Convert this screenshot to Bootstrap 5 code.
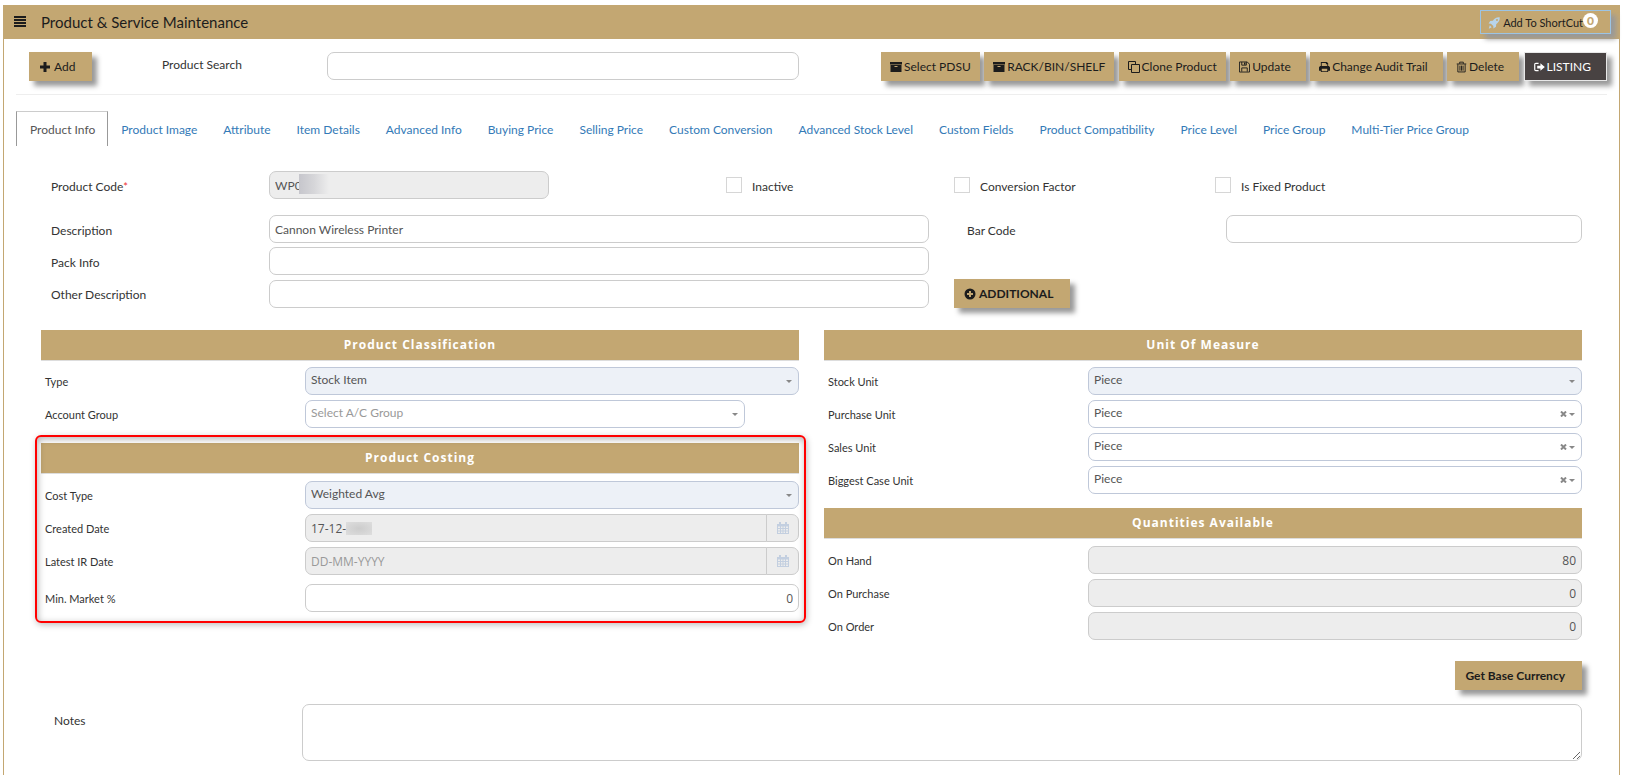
<!DOCTYPE html>
<html lang="en">
<head>
<meta charset="utf-8">
<meta name="viewport" content="width=device-width, initial-scale=1">
<title>Product &amp; Service Maintenance</title>
<link href="https://cdn.jsdelivr.net/npm/bootstrap@5.3.0/dist/css/bootstrap.min.css" rel="stylesheet">
<style>
  :root { --gold: #c3a772; --line: #ccc; }
  body { font-family: Lato, "Open Sans", sans-serif; font-size: 12px; line-height: 18px; color: #333; background: #fff; }
  .app-frame { margin: 5px 5px 0 3px; border: 1px solid var(--gold); border-top: 0; border-bottom: 0; min-height: calc(100vh - 5px); }
  .app-bar { background: var(--gold); height: 34px; padding: 0 8px 0 10px; color: #1c1c1c; }
  .app-bar h1 { font-size: 15px; line-height: 20px; font-weight: 400; }
  .bar-icon { margin-right: 15px; }
  .workarea { padding: 13px 12px 0; }

  .btn-gold { --bs-btn-color: #1c1c1c; --bs-btn-bg: var(--gold); --bs-btn-hover-bg: #b39660; --bs-btn-active-bg: #b39660;
    --bs-btn-border-radius: 0; --bs-btn-border-width: 0; --bs-btn-font-size: 12px; --bs-btn-line-height: 18px;
    height: 29px; padding: 0 10px; display: inline-flex; align-items: center; gap: 3px; white-space: nowrap;
    box-shadow: 5px 5px 5px #999; }
  .btn-gold.trail { padding-right: 17px; }
  .btn-listing { --bs-btn-color: #fff; --bs-btn-bg: #484242; --bs-btn-hover-color: #fff; border: 1px solid #e8e8e8; }
  .btn-cut { --bs-btn-font-size: 11px; height: 24px; padding: 2px 24px 0 7px; border: 1px solid #9cc4e4; position: relative; }
  .btn-cut .cut-count { position: absolute; top: 2px; right: 12px; width: 15px; height: 15px; border-radius: 8px; padding: 0;
    background: #fff; color: var(--gold); font-size: 12px; line-height: 15px; font-weight: 900; text-align: center; }
  .ico { width: 12px; height: 12px; flex: none; fill: currentColor; }
  .ico-rocket { color: #b8d4ea; }

  .toolbar { display: grid; grid-template-columns: 133fr 165fr 472fr 82fr 726fr; padding-left: 13px; align-items: start; }
  .toolbar-actions { display: flex; justify-content: space-between; }
  .toolbar-actions .btn-gold { padding: 0 9px; gap: 2px; }
  .toolbar-actions .btn-gold.trail { padding-right: 15px; }
  .toolbar-actions .trail .ico { width: 11px; }
  .rule { height: 1px; margin: 13px 0 16px; background: #eee; }

  .form-control, .form-select { height: 28px; padding: 0 5px; border: 1px solid var(--line); border-radius: 7px; font-size: 12px;
    line-height: 18px; color: #555; background-color: #fff; }
  .form-control:disabled { background: #ededed; opacity: 1; color: #555; }
  .form-control::placeholder { color: #999; }
  .form-control.figures { font-family: "Open Sans", sans-serif; }
  .form-select { padding: 0 30px 3px 5px; border-color: #bfc8d9; background-image: none; }
  .form-select:disabled { background-color: #edf1f7; color: #555; opacity: 1; }
  .form-select.hint { color: #999; }
  .pick { position: relative; }
  .pick::after { content: ""; position: absolute; right: 7px; top: 13px; border: 3px solid transparent; border-top-color: #888; border-bottom: 0; pointer-events: none; }
  .pick-clear { position: absolute; right: 14px; top: 9px; width: 8px; height: 10px; padding: 0; border: 0; background: none; color: #888; display: flex; align-items: center; }
  .pick-clear svg { width: 7px; height: 6px; stroke: currentColor; stroke-width: 2; }

  .nav-tabs { --bs-nav-tabs-border-width: 0; --bs-nav-tabs-border-radius: 0; --bs-nav-link-padding-x: 13px; --bs-nav-link-font-size: 12px; --bs-nav-link-color: #337ab7; }
  .nav-tabs .nav-link { height: 35px; padding-top: 10px; padding-bottom: 7px; white-space: nowrap; margin: 0; }
  .nav-tabs .nav-link.active { color: #555; border: 1px solid #999; border-top-color: #ccc; border-bottom: 0; padding: 9px 12px 7px 13px; }

  .panel-body { padding: 25px 25px 0; }
  .grid-flags { display: grid; grid-template-columns: 228fr 280fr 177fr 228fr 261fr 367fr; align-items: center; margin-bottom: 16px; }
  .grid-flags label, .grid-desc label { padding-top: 3px; }
  .grid-desc { display: grid; grid-template-columns: 228fr 660fr 25fr 272fr 356fr; row-gap: 4px; align-items: center; margin-bottom: 22px; }
  .indent { padding-left: 10px; }
  .indent-code { padding-left: 13px; }
  .flag { display: flex; align-items: center; gap: 10px; }
  .flag .form-check-input { width: 16px; height: 16px; margin: 0; border: 1px solid #d6d6d6; border-radius: 0; }
  .req { color: #e33; font-size: 11px; }

  .sections { display: grid; grid-template-columns: 1fr 1fr; column-gap: 25px; align-items: start; }
  .sec-head { background: var(--gold); border-bottom: 1px solid #ddd; height: 31px; color: #fff; font-family: "Open Sans", sans-serif; font-size: 12px; line-height: 30px; font-weight: 700;
    letter-spacing: 1px; text-align: center; margin: 0; }
  .sec-rows { display: grid; grid-template-columns: 264fr 494fr; row-gap: 5px; align-items: center; padding-top: 6px; }
  .sec-rows.roomy { padding-top: 7px; }
  .sec-rows > label { padding-left: 4px; font-size: 11px; padding-top: 2px; }
  .short { width: 89%; }
  .sec-gap { margin-top: 15px; }
  .sec-gap-right { margin-top: 14px; }
  .last-row { margin-top: 4px; }
  .date-group .form-control { border-radius: 7px 0 0 7px; }
  .date-btn { width: 33px; height: 28px; border: 1px solid var(--line); margin-left: -1px; border-radius: 0 7px 7px 0; background: #ededed; color: #c3cfe0;
    display: flex; align-items: center; justify-content: center; padding: 0; }

  /* highlighted section */
  .callout-box { position: relative; }
  .callout-box::after { content: ""; position: absolute; inset: -8px -7px -11px -6px; border: 2px solid #f00; border-radius: 6px; pointer-events: none;
    box-shadow: 1px 2px 6px rgba(0,0,0,.25), inset 1px 2px 7px rgba(0,0,0,.3); }
  /* masked characters */
  .masked { position: relative; }
  .masked::after { content: ""; position: absolute; left: 30px; top: 3px; width: 30px; height: 20px; background: linear-gradient(90deg, #c6c6cc, #d6d6d9 50%, #ededed); }
  .masked.date::after { left: 41px; top: 8px; width: 26px; height: 13px; background: radial-gradient(#ccc, #dedede); z-index: 6; }

  .base-row { margin-top: 21px; }
  .notes-grid { display: grid; grid-template-columns: 261fr 1280fr; margin-top: 14px; align-items: start; }
  .notes-grid textarea.form-control { height: 57px; min-height: 0; display: block; }
</style>
</head>
<body>
<div class="app-frame">
  <header class="app-bar d-flex align-items-center">
    <svg class="ico bar-icon" viewBox="0 0 12 12" aria-hidden="true"><path d="M0 0h12v2H0zM0 3h12v2H0zM0 6h12v2H0zM0 9h12v2H0z"/></svg>
    <h1 class="m-0">Product &amp; Service Maintenance</h1>
    <button type="button" class="btn btn-gold btn-cut ms-auto">
      <svg class="ico ico-rocket" viewBox="0 0 12 12" aria-hidden="true"><path d="M11.7.3C8.500 0 6.500 1.500 4.800 3.800L2.200 4 .6 6.600l2.300.1 2.400 2.400.1 2.300L8 9.800l.2-2.600C10.500 5.500 12 3.500 11.700.3zM9 2a1 1 0 1 1 0 2 1 1 0 0 1 0-2zM1.800 8.300 3.700 10.200 .8 11.700z" fill-rule="evenodd"/></svg>
      Add To ShortCut<span class="cut-count">0</span>
    </button>
  </header>

  <main class="workarea">
    <div class="toolbar">
      <div class="d-flex"><button type="button" class="btn btn-gold trail">
        <svg class="ico" viewBox="0 0 12 12" aria-hidden="true"><path d="M4.500 1h3v3.500H11v3H7.500V11h-3V7.500H1v-3h3.500z"/></svg>Add</button></div>
      <label class="pt-1" for="psearch">Product Search</label>
      <input id="psearch" type="text" class="form-control">
      <span></span>
      <div class="toolbar-actions">
        <button type="button" class="btn btn-gold"><svg class="ico" viewBox="0 0 12 12" aria-hidden="true"><path fill-rule="evenodd" d="M0 1h12v2.500H0zM.5 4h11v7H.5zM4.500 5v1h3V5z"/></svg>Select PDSU</button>
        <button type="button" class="btn btn-gold"><svg class="ico" viewBox="0 0 12 12" aria-hidden="true"><path fill-rule="evenodd" d="M0 1h12v2.500H0zM.5 4h11v7H.5zM4.500 5v1h3V5z"/></svg>RACK/BIN/SHELF</button>
        <button type="button" class="btn btn-gold"><svg class="ico" viewBox="0 0 12 12" aria-hidden="true"><path fill="none" stroke="currentColor" d="M3.500 8.500h-3v-8h7v2.500M3.500 3.500h8v8h-8z"/></svg>Clone Product</button>
        <button type="button" class="btn btn-gold trail"><svg class="ico" viewBox="0 0 12 12" aria-hidden="true"><path fill="none" stroke="currentColor" d="M.5.5h8.500l2.500 2.500v8.500H.5zM3 11V7h6v4M3 .5V4h5V.5"/><path d="M5.500 1H7v2.500H5.500z"/></svg>Update</button>
        <button type="button" class="btn btn-gold trail"><svg class="ico" viewBox="0 0 12 12" aria-hidden="true"><path fill-rule="evenodd" d="M2 .5h6.500L10 2v3h.8L12 6.200V10h-2v1.500H2V10H0V6.200L1.200 5H2zM3 1.500V5h6V3H7.500V1.500zM3 8v2.500h6V8z"/></svg>Change Audit Trail</button>
        <button type="button" class="btn btn-gold trail"><svg class="ico" viewBox="0 0 12 12" aria-hidden="true"><path fill="none" stroke="currentColor" d="M.8 2.700h10.400M4 2.500V.7h4v1.800M2 3v8.400h8V3M4.300 4.500V10M6 4.500V10M7.700 4.500V10"/></svg>Delete</button>
        <button type="button" class="btn btn-gold btn-listing trail"><svg class="ico" viewBox="0 0 12 12" aria-hidden="true"><path fill="none" stroke="currentColor" stroke-width="1.300" d="M5 2H2Q.8 2 .8 3.200v5.600Q.8 10 2 10h3"/><path d="M3.500 4.500h3.500V1.800L11.800 6 7 10.200V7.500H3.500z"/></svg>LISTING</button>
      </div>
    </div>
    <div class="rule"></div>

    <nav>
      <ul class="nav nav-tabs flex-nowrap">
        <li class="nav-item"><a class="nav-link active" aria-current="page" href="#info">Product Info</a></li>
        <li class="nav-item"><a class="nav-link" href="#image">Product Image</a></li>
        <li class="nav-item"><a class="nav-link" href="#attribute">Attribute</a></li>
        <li class="nav-item"><a class="nav-link" href="#details">Item Details</a></li>
        <li class="nav-item"><a class="nav-link" href="#advanced">Advanced Info</a></li>
        <li class="nav-item"><a class="nav-link" href="#buying">Buying Price</a></li>
        <li class="nav-item"><a class="nav-link" href="#selling">Selling Price</a></li>
        <li class="nav-item"><a class="nav-link" href="#conversion">Custom Conversion</a></li>
        <li class="nav-item"><a class="nav-link" href="#stock">Advanced Stock Level</a></li>
        <li class="nav-item"><a class="nav-link" href="#fields">Custom Fields</a></li>
        <li class="nav-item"><a class="nav-link" href="#compat">Product Compatibility</a></li>
        <li class="nav-item"><a class="nav-link" href="#level">Price Level</a></li>
        <li class="nav-item"><a class="nav-link" href="#group">Price Group</a></li>
        <li class="nav-item"><a class="nav-link" href="#tier">Multi-Tier Price Group</a></li>
      </ul>
    </nav>

    <form class="panel-body" id="info">
      <div class="grid-flags">
        <label class="indent" for="code">Product Code<span class="req">*</span></label>
        <div class="masked"><input id="code" type="text" class="form-control" value="WP0" disabled></div>
        <span></span>
        <div class="flag"><input class="form-check-input" type="checkbox" id="inactive"><label for="inactive">Inactive</label></div>
        <div class="flag"><input class="form-check-input" type="checkbox" id="factor"><label for="factor">Conversion Factor</label></div>
        <div class="flag"><input class="form-check-input" type="checkbox" id="fixed"><label for="fixed">Is Fixed Product</label></div>
      </div>

      <div class="grid-desc">
        <label class="indent" for="desc">Description</label>
        <input id="desc" type="text" class="form-control" value="Cannon Wireless Printer">
        <span></span>
        <label class="indent-code" for="barcode">Bar Code</label>
        <input id="barcode" type="text" class="form-control">

        <label class="indent" for="pack">Pack Info</label>
        <input id="pack" type="text" class="form-control">
        <span></span><span></span><span></span>

        <label class="indent" for="other">Other Description</label>
        <input id="other" type="text" class="form-control">
        <span></span>
        <div class="d-flex"><button type="button" class="btn btn-gold trail fw-bold"><svg class="ico" viewBox="0 0 12 12" aria-hidden="true"><path fill-rule="evenodd" d="M6 .5a5.500 5.500 0 1 1 0 11 5.500 5.500 0 0 1 0-11zM5 3v2H3v2h2v2h2V7h2V5H7V3z"/></svg>ADDITIONAL</button></div>
      </div>

      <div class="sections">
        <div>
          <section>
            <h2 class="sec-head">Product Classification</h2>
            <div class="sec-rows">
              <label for="type">Type</label>
              <div class="pick"><select id="type" class="form-select" disabled><option>Stock Item</option></select></div>
              <label for="account">Account Group</label>
              <div class="pick short"><select id="account" class="form-select hint"><option>Select A/C Group</option></select></div>
            </div>
          </section>
          <section class="callout-box sec-gap">
            <h2 class="sec-head">Product Costing</h2>
            <div class="sec-rows roomy">
              <label for="cost">Cost Type</label>
              <div class="pick"><select id="cost" class="form-select" disabled><option>Weighted Avg</option></select></div>
              <label for="created">Created Date</label>
              <div class="d-flex date-group masked date">
                <input id="created" type="text" class="form-control figures" value="17-12-" disabled>
                <button type="button" class="date-btn flex-shrink-0" disabled aria-label="Pick created date"><svg class="ico" viewBox="0 0 12 12" aria-hidden="true"><path fill-rule="evenodd" d="M0 2h2V0h2v2h4V0h2v2h2v10H0zM1 4.500V6h2V4.500zM4 4.500V6h1.500V4.500zM6.500 4.500V6H8V4.500zM9 4.500V6h2V4.500zM1 7v1.500h2V7zM4 7v1.500h1.500V7zM6.500 7v1.500H8V7zM9 7v1.500h2V7zM1 9.500V11h2V9.500zM4 9.500V11h1.500V9.500zM6.500 9.500V11H8V9.500zM9 9.500V11h2V9.500z"/></svg></button>
              </div>
              <label for="latest">Latest IR Date</label>
              <div class="d-flex date-group">
                <input id="latest" type="text" class="form-control figures" placeholder="DD-MM-YYYY" disabled>
                <button type="button" class="date-btn flex-shrink-0" disabled aria-label="Pick latest date"><svg class="ico" viewBox="0 0 12 12" aria-hidden="true"><path fill-rule="evenodd" d="M0 2h2V0h2v2h4V0h2v2h2v10H0zM1 4.500V6h2V4.500zM4 4.500V6h1.500V4.500zM6.500 4.500V6H8V4.500zM9 4.500V6h2V4.500zM1 7v1.500h2V7zM4 7v1.500h1.500V7zM6.500 7v1.500H8V7zM9 7v1.500h2V7zM1 9.500V11h2V9.500zM4 9.500V11h1.500V9.500zM6.500 9.500V11H8V9.500zM9 9.500V11h2V9.500z"/></svg></button>
              </div>
              <label class="last-row" for="market">Min. Market %</label>
              <input id="market" type="text" class="form-control figures text-end last-row" value="0">
            </div>
          </section>
        </div>

        <div>
          <section>
            <h2 class="sec-head">Unit Of Measure</h2>
            <div class="sec-rows">
              <label for="u1">Stock Unit</label>
              <div class="pick"><select id="u1" class="form-select" disabled><option>Piece</option></select></div>
              <label for="u2">Purchase Unit</label>
              <div class="pick"><select id="u2" class="form-select"><option>Piece</option></select><button type="button" class="pick-clear" aria-label="Clear purchase unit"><svg viewBox="0 0 7 6"><path d="M1 .5l5 5M6 .5l-5 5"/></svg></button></div>
              <label for="u3">Sales Unit</label>
              <div class="pick"><select id="u3" class="form-select"><option>Piece</option></select><button type="button" class="pick-clear" aria-label="Clear sales unit"><svg viewBox="0 0 7 6"><path d="M1 .5l5 5M6 .5l-5 5"/></svg></button></div>
              <label for="u4">Biggest Case Unit</label>
              <div class="pick"><select id="u4" class="form-select"><option>Piece</option></select><button type="button" class="pick-clear" aria-label="Clear case unit"><svg viewBox="0 0 7 6"><path d="M1 .5l5 5M6 .5l-5 5"/></svg></button></div>
            </div>
          </section>
          <section class="sec-gap-right">
            <h2 class="sec-head">Quantities Available</h2>
            <div class="sec-rows roomy">
              <label for="q1">On Hand</label>
              <input id="q1" type="text" class="form-control figures text-end" value="80" disabled>
              <label for="q2">On Purchase</label>
              <input id="q2" type="text" class="form-control figures text-end" value="0" disabled>
              <label for="q3">On Order</label>
              <input id="q3" type="text" class="form-control figures text-end" value="0" disabled>
            </div>
          </section>
        </div>
      </div>

      <div class="d-flex justify-content-end base-row">
        <button type="button" class="btn btn-gold trail fw-bold">Get Base Currency</button>
      </div>

      <div class="notes-grid">
        <label for="notes" class="indent-code pt-2">Notes</label>
        <textarea id="notes" class="form-control"></textarea>
      </div>
    </form>
  </main>
</div>
<script src="https://cdn.jsdelivr.net/npm/bootstrap@5.3.0/dist/js/bootstrap.bundle.min.js"></script>
</body>
</html>
